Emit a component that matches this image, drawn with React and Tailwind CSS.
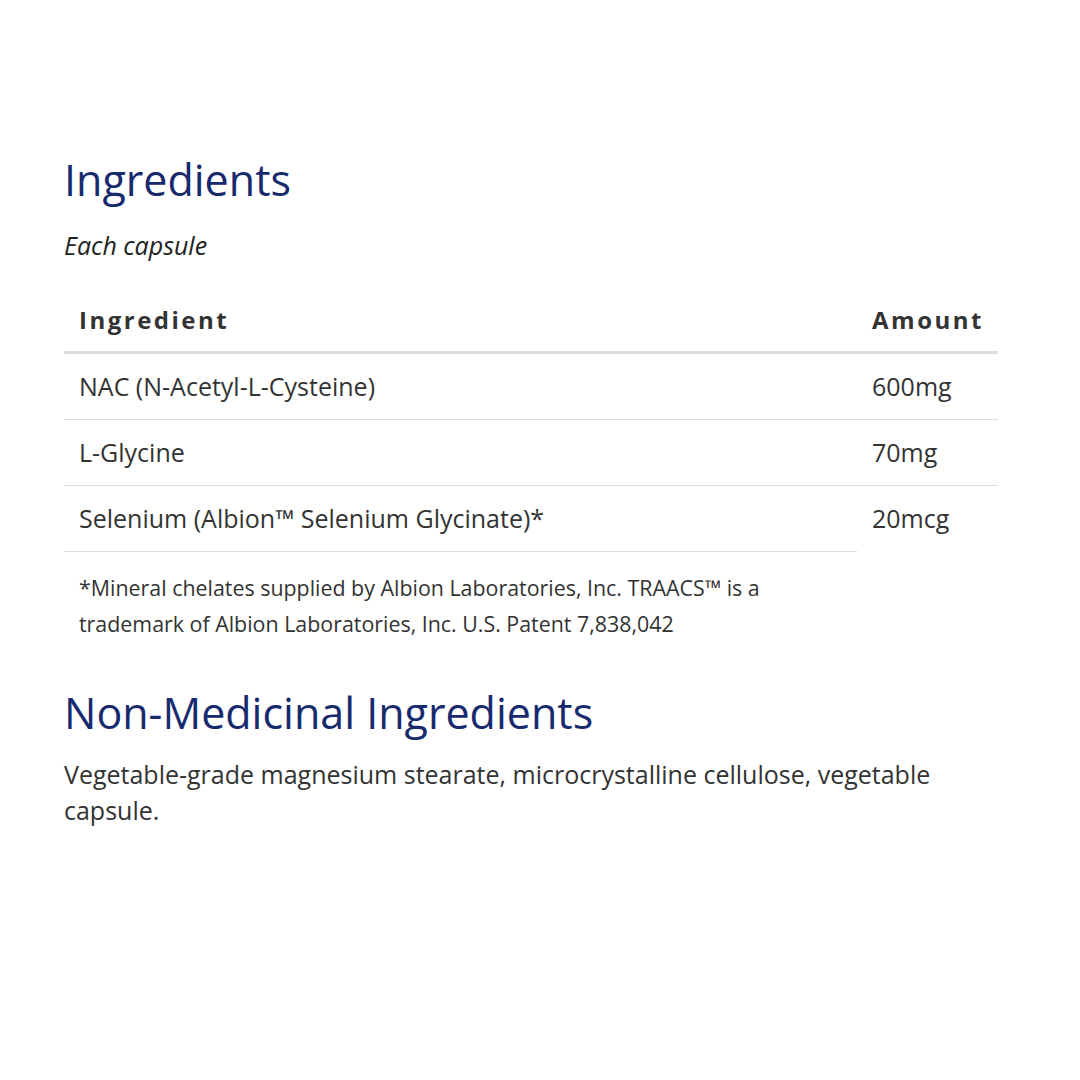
import React from 'react';

const rows = [
  { name: 'NAC (N-Acetyl-L-Cysteine)', amount: '600mg' },
  { name: 'L-Glycine', amount: '70mg' },
  { name: 'Selenium (Albion™ Selenium Glycinate)*', amount: '20mcg' },
];

export default function App() {
  return (
    <div className="min-h-[1080px] w-[1080px] bg-white font-['Open_Sans',sans-serif] text-[#333333]">
      <div className="pl-[64px] pt-[154px] w-[998px]">
        {/* Ingredients */}
        <h2 className="text-[43px] leading-[52px] font-normal text-[#182a6e]">Ingredients</h2>
        <p className="mt-[21px] text-[25px] leading-[36px] italic text-[#222222]">Each capsule</p>

        <div className="mt-[26px] grid grid-cols-[793px_141px]">
          <div className="px-[15px] pt-[13px] pb-[13px] border-b-[3px] border-[#dddddd] text-[24px] leading-[36px] font-bold tracking-[2.5px]">
            Ingredient
          </div>
          <div className="px-[15px] pt-[13px] pb-[13px] border-b-[3px] border-[#dddddd] text-[24px] leading-[36px] font-bold tracking-[2.5px]">
            Amount
          </div>
          {rows.map((r, i) => (
            <React.Fragment key={r.name}>
              <div className="px-[15px] pt-[14px] pb-[15px] border-b border-[#dddddd] text-[25px] leading-[36px]">
                {r.name}
              </div>
              <div
                className={
                  i === rows.length - 1
                    ? 'px-[15px] pt-[14px] pb-[15px] text-[25px] leading-[36px]'
                    : 'px-[15px] pt-[14px] pb-[15px] border-b border-[#dddddd] text-[25px] leading-[36px]'
                }
              >
                {r.amount}
              </div>
            </React.Fragment>
          ))}
        </div>

        <p className="mt-[18px] w-[793px] px-[15px] text-[21.4px] leading-[36px]">
          *Mineral chelates supplied by Albion Laboratories, Inc. TRAACS™ is a trademark of Albion Laboratories, Inc. U.S. Patent 7,838,042
        </p>

        {/* Non-Medicinal Ingredients */}
        <h2 className="mt-[45px] text-[43px] leading-[52px] font-normal text-[#182a6e]">Non-Medicinal Ingredients</h2>
        <p className="mt-[17px] text-[25px] leading-[36px]">
          Vegetable-grade magnesium stearate, microcrystalline cellulose, vegetable capsule.
        </p>
      </div>
    </div>
  );
}
